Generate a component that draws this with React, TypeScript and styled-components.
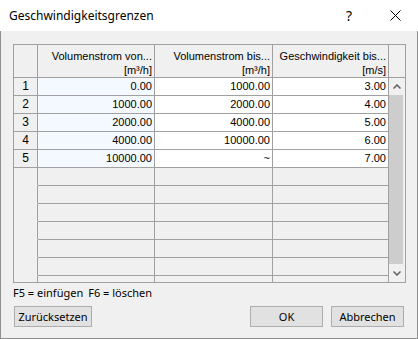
import styled, { createGlobalStyle } from "styled-components";

const GlobalStyle = createGlobalStyle`
  html, body {
    margin: 0;
    padding: 0;
    background: #ffffff;
  }
  body {
    width: 418px;
    height: 339px;
    overflow: hidden;
  }
`;

const Dialog = styled.div`
  width: 418px;
  font-family: "Noto Sans", "DejaVu Sans", sans-serif;
  font-size: 11px;
  color: #000;
`;

const TitleBar = styled.div`
  height: 31px;
  background: #ffffff;
  display: flex;
  align-items: center;
  padding-left: 9px;
  box-sizing: border-box;
`;

const Title = styled.span`
  flex: 1;
  font-size: 12px;
`;

const TitleButton = styled.div`
  width: 46px;
  height: 31px;
  display: flex;
  align-items: center;
  justify-content: center;
  font-size: 14px;
`;

const Body = styled.div`
  background: #f0f0f0;
  border-left: 1px solid #8f8f8f;
  border-right: 1px solid #8f8f8f;
  border-bottom: 1px solid #8f8f8f;
  padding: 13px 12px 11px 12px;
  display: flex;
  flex-direction: column;
`;

const Grid = styled.div`
  width: 393px;
  height: 239px;
  box-sizing: border-box;
  border: 1px solid #a0a0a0;
  display: flex;
  flex-direction: column;
  font-family: "Liberation Sans", Arial, sans-serif;
  font-size: 11px;
  overflow: hidden;
`;

const Row = styled.div`
  display: flex;
  flex-shrink: 0;
`;

const HeadCell = styled.div<{ $w: number; $last?: boolean }>`
  width: ${(p) => p.$w}px;
  height: 33px;
  box-sizing: border-box;
  border-right: ${(p) => (p.$last ? "none" : "1px solid #a0a0a0")};
  border-bottom: 1px solid #a0a0a0;
  background: #f0f0f0;
  padding: 4px 2px 0 0;
  text-align: right;
  line-height: 14px;
  white-space: nowrap;
  overflow: hidden;
`;

const Content = styled.div`
  display: flex;
  flex: 1;
  min-height: 0;
`;

const Rows = styled.div`
  width: 375px;
  display: flex;
  flex-direction: column;
  overflow: hidden;
`;

const Cell = styled.div<{ $w: number; $bg: string; $align?: string; $noLine?: boolean }>`
  width: ${(p) => p.$w}px;
  height: 18px;
  box-sizing: border-box;
  border-right: 1px solid #a0a0a0;
  border-bottom: 1px solid ${(p) => (p.$noLine ? "transparent" : "#a0a0a0")};
  background: ${(p) => p.$bg};
  text-align: ${(p) => p.$align || "right"};
  padding-right: ${(p) => (p.$align === "center" ? 0 : 2)}px;
  font-size: ${(p) => (p.$align === "center" ? 12 : 11)}px;
  line-height: 17px;
  white-space: nowrap;
`;

const Scrollbar = styled.div`
  width: 16px;
  display: flex;
  flex-direction: column;
  background: #f0f0f0;
`;

const ScrollArrow = styled.div`
  height: 17px;
  display: flex;
  align-items: center;
  justify-content: center;
  flex-shrink: 0;
`;

const Thumb = styled.div`
  flex: 1;
  margin: 0 2px 1px 0;
  background: #cdcdcd;
`;

const Hint = styled.div`
  margin-top: 2px;
  line-height: 16px;
  word-spacing: 0;
`;

const Gap = styled.span`
  display: inline-block;
  width: 5px;
`;

const ButtonRow = styled.div`
  margin-top: 5px;
  display: flex;
  gap: 8px;
  padding: 0 1px;
`;

const Button = styled.div<{ $w: number; $push?: boolean }>`
  width: ${(p) => p.$w}px;
  height: 21px;
  box-sizing: border-box;
  border: 1px solid #adadad;
  background: #e1e1e1;
  display: flex;
  align-items: center;
  justify-content: center;
  margin-left: ${(p) => (p.$push ? "auto" : "0")};
`;

const W = [24, 117, 118, 116];

const data = [
  ["1", "0.00", "1000.00", "3.00"],
  ["2", "1000.00", "2000.00", "4.00"],
  ["3", "2000.00", "4000.00", "5.00"],
  ["4", "4000.00", "10000.00", "6.00"],
  ["5", "10000.00", "~", "7.00"],
];

const Chevron = ({ up }: { up?: boolean }) => (
  <svg width="8" height="5" viewBox="0 0 8 5">
    <path
      d={up ? "M0.5 4.5 L4 1 L7.5 4.5" : "M0.5 0.5 L4 4 L7.5 0.5"}
      fill="none"
      stroke="#606060"
      strokeWidth="1.5"
    />
  </svg>
);

const CloseIcon = () => (
  <svg width="11" height="11" viewBox="0 0 11 11">
    <path d="M0.5 0.5 L10.5 10.5 M10.5 0.5 L0.5 10.5" stroke="#000" strokeWidth="1" />
  </svg>
);

export default function App() {
  return (
    <>
      <GlobalStyle />
      <Dialog>
        <TitleBar>
          <Title>Geschwindigkeitsgrenzen</Title>
          <TitleButton>?</TitleButton>
          <TitleButton>
            <CloseIcon />
          </TitleButton>
        </TitleBar>
        <Body>
          <Grid>
            <Row>
              <HeadCell $w={W[0]} />
              <HeadCell $w={W[1]}>
                Volumenstrom von...
                <br />
                [m³/h]
              </HeadCell>
              <HeadCell $w={W[2]}>
                Volumenstrom bis...
                <br />
                [m³/h]
              </HeadCell>
              <HeadCell $w={W[3]}>
                Geschwindigkeit bis...
                <br />
                [m/s]
              </HeadCell>
              <HeadCell $w={16} $last />
            </Row>
            <Content>
              <Rows>
                {data.map((r) => (
                  <Row key={r[0]}>
                    <Cell $w={W[0]} $bg="#f0f0f0" $align="center">
                      {r[0]}
                    </Cell>
                    <Cell $w={W[1]} $bg="#f4f9ff">
                      {r[1]}
                    </Cell>
                    <Cell $w={W[2]} $bg="#ffffff">
                      {r[2]}
                    </Cell>
                    <Cell $w={W[3]} $bg="#ffffff">
                      {r[3]}
                    </Cell>
                  </Row>
                ))}
                {Array.from({ length: 7 }).map((_, i) => (
                  <Row key={"e" + i}>
                    <Cell $w={W[0]} $bg="#f0f0f0" $noLine />
                    <Cell $w={W[1]} $bg="#f0f0f0" />
                    <Cell $w={W[2]} $bg="#f0f0f0" />
                    <Cell $w={W[3]} $bg="#f0f0f0" />
                  </Row>
                ))}
              </Rows>
              <Scrollbar>
                <ScrollArrow>
                  <Chevron up />
                </ScrollArrow>
                <Thumb />
                <ScrollArrow>
                  <Chevron />
                </ScrollArrow>
              </Scrollbar>
            </Content>
          </Grid>
          <Hint>
            F5 = einfügen
            <Gap />
            F6 = löschen
          </Hint>
          <ButtonRow>
            <Button $w={78}>Zurücksetzen</Button>
            <Button $w={73} $push>
              OK
            </Button>
            <Button $w={73}>Abbrechen</Button>
          </ButtonRow>
        </Body>
      </Dialog>
    </>
  );
}
